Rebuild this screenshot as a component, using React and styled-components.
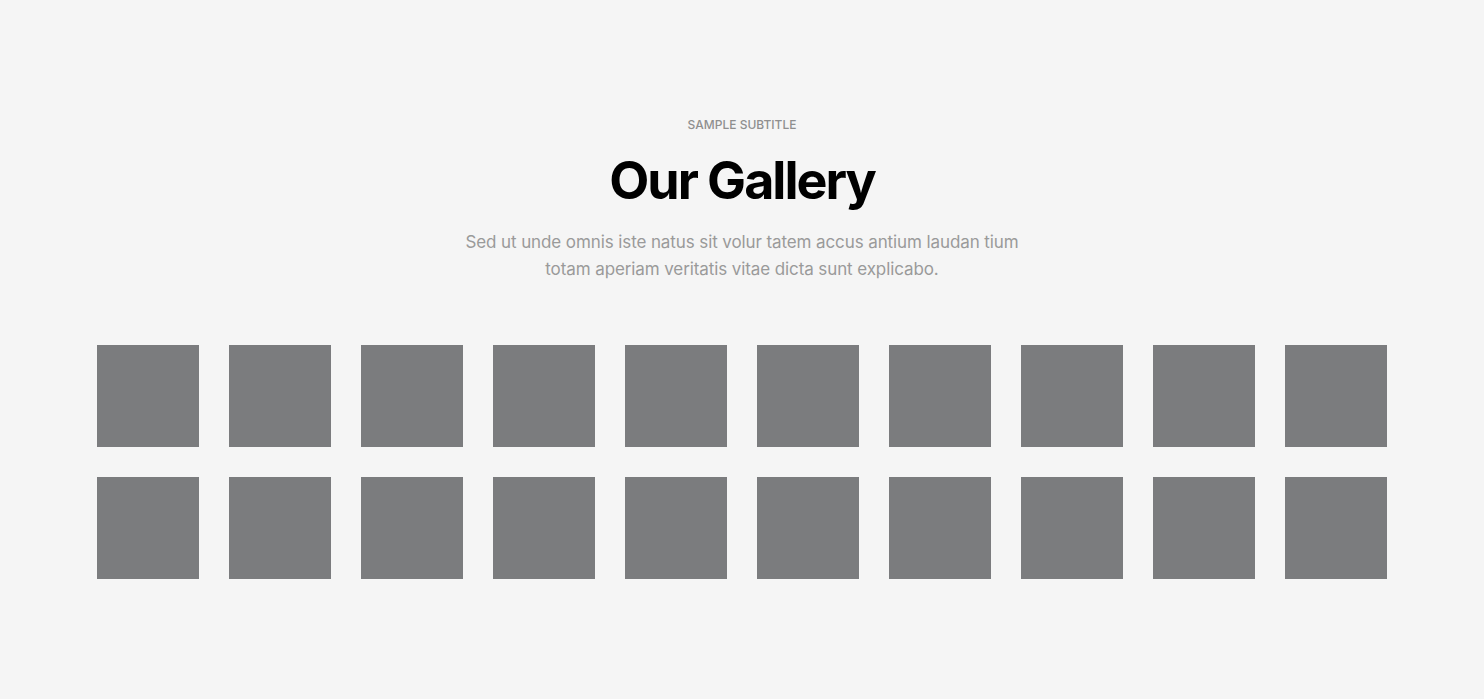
import React from 'react'
import styled, { createGlobalStyle } from 'styled-components'

const GlobalStyle = createGlobalStyle`
  html, body {
    margin: 0;
    background: #f5f5f5;
    font-family: Inter, "Noto Sans", sans-serif;
  }
`

const Section = styled.section`
  padding: 117px 0 120px;
  display: flex;
  flex-direction: column;
  align-items: center;
`

const Header = styled.div`
  text-align: center;
  max-width: 600px;
  display: flex;
  flex-direction: column;
  align-items: center;
`

const SubTitle = styled.p`
  margin: 0;
  font-size: 12px;
  line-height: 16px;
  font-weight: 500;
  color: #8f8f8f;
  text-transform: uppercase;
`

const Title = styled.h2`
  margin: 13px 0 0;
  font-size: 52px;
  line-height: 70px;
  font-weight: 700;
  letter-spacing: -2px;
  color: #000;
`

const Lead = styled.p`
  margin: 13px 0 0;
  max-width: 580px;
  font-size: 17px;
  line-height: 27px;
  color: #9a9a9a;
  letter-spacing: -0.1px;
`

const Grid = styled.div`
  margin-top: 62px;
  display: grid;
  grid-template-columns: repeat(10, 102px);
  gap: 30px;
`

const Tile = styled.div`
  width: 102px;
  height: 102px;
  background: #7b7c7e;
`

const tiles = Array.from({ length: 20 }, (_, i) => i)

export default function App() {
  return (
    <>
      <GlobalStyle />
      <Section>
        <Header>
          <SubTitle>Sample subtitle</SubTitle>
          <Title>Our Gallery</Title>
          <Lead>
            Sed ut unde omnis iste natus sit volur tatem accus antium laudan tium
            totam aperiam veritatis vitae dicta sunt explicabo.
          </Lead>
        </Header>
        <Grid>
          {tiles.map(i => (
            <Tile key={i} />
          ))}
        </Grid>
      </Section>
    </>
  )
}
